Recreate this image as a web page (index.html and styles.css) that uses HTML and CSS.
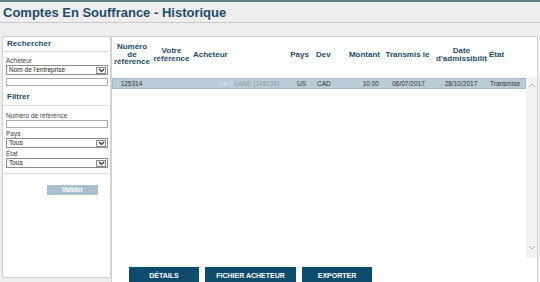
FILE: index.html
```html
<!DOCTYPE html>
<html lang="fr">
<head>
	<meta charset="utf-8">
	<title>Comptes En Souffrance - Historique</title>
	<link rel="stylesheet" href="styles.css">
</head>
<body>
	<div class="topbar">
		<h1>Comptes En Souffrance - Historique</h1>
	</div>
	<div class="main">
		<div class="side">
			<div class="sec_head">Rechercher</div>
			<div class="fld">
				<label>Acheteur</label>
				<div class="sel"><span>Nom de l'entreprise</span><i><svg width="7" height="5" viewBox="0 0 7 5"><path d="M1 1l2.5 2.5L6 1" fill="none" stroke="#333" stroke-width="1.2"/></svg></i></div>
				<div class="inp mt3"></div>
			</div>
			<div class="sec_head sec_head2">Filtrer</div>
			<div class="fld filters">
				<label>Numéro de référence</label>
				<div class="inp"></div>
				<label>Pays</label>
				<div class="sel"><span>Tous</span><i><svg width="7" height="5" viewBox="0 0 7 5"><path d="M1 1l2.5 2.5L6 1" fill="none" stroke="#333" stroke-width="1.2"/></svg></i></div>
				<label>État</label>
				<div class="sel"><span>Tous</span><i><svg width="7" height="5" viewBox="0 0 7 5"><path d="M1 1l2.5 2.5L6 1" fill="none" stroke="#333" stroke-width="1.2"/></svg></i></div>
			</div>
			<a class="btn_valider">Valider</a>
		</div>
		<div class="content">
			<div class="grid_row grid_head">
				<div class="c c1">Numéro de référence</div>
				<div class="c c2">Votre référence</div>
				<div class="c c3">Acheteur</div>
				<div class="c c4">Pays</div>
				<div class="c c5">Dev</div>
				<div class="c c6">Montant</div>
				<div class="c c7">Transmis le</div>
				<div class="c c8">Date d'admissibilité</div>
				<div class="c c9">État</div>
			</div>
			<div class="scroller">
				<div class="rows">
					<div class="grid_row grid_data current">
						<div class="c c1">125314</div>
						<div class="c c2"></div>
						<div class="c c3"><em>DAVI</em> LANE (145195)</div>
						<div class="c c4">US</div>
						<div class="c c5">CAD</div>
						<div class="c c6">10.00</div>
						<div class="c c7">06/07/2017</div>
						<div class="c c8">28/10/2017</div>
						<div class="c c9">Transmise</div>
					</div>
				</div>
				<div class="sbar">
					<svg width="8" height="5" viewBox="0 0 8 5"><path d="M1 4l3-3 3 3" fill="none" stroke="#b4b4b4" stroke-width="1"/></svg>
					<svg width="8" height="5" viewBox="0 0 8 5"><path d="M1 1l3 3 3-3" fill="none" stroke="#b4b4b4" stroke-width="1"/></svg>
				</div>
			</div>
			<div class="btnbar">
				<a class="btn">DÉTAILS</a>
				<a class="btn btn_wide">FICHIER ACHETEUR</a>
				<a class="btn">EXPORTER</a>
			</div>
		</div>
	</div>
</body>
</html>
```
FILE: styles.css
```css
*{margin:0;padding:0;box-sizing:border-box;}
html,body{height:100%;overflow:hidden;}
body{background:#eeeeee;font-family:"Liberation Sans",Arial,sans-serif;color:#333;}

.topbar{border-top:2px solid #5c7d8d;border-bottom:1px solid #c9c9c9;padding:3px 3px 2px;}
.topbar h1{font-size:13px;line-height:15px;font-weight:bold;color:#1d4d6b;}

.main{display:flex;align-items:flex-start;margin:13px 0 0 2px;}

/* left panel */
.side{width:109px;height:242px;background:#fff;border:1px solid #d2d2d2;}
.sec_head{font-size:8px;font-weight:bold;color:#1d4d6b;line-height:14px;padding-left:4px;border-bottom:1px solid #dcdcdc;}
.sec_head2{margin-top:2px;line-height:17px;}
.fld{padding:0 2px 0 3px;}
.fld label{display:block;font-size:6.5px;line-height:9px;color:#444;margin-top:4px;}
.filters label{margin-top:1px;}
.filters label:first-child{margin-top:5px;}
.sel{display:flex;align-items:center;height:10px;border:1px solid #8c8c8c;background:#fff;font-size:6.5px;line-height:8px;padding-left:2px;}
.sel span{flex:1;color:#222;}
.sel i{display:flex;align-items:center;justify-content:center;width:10px;height:7px;margin-right:1px;border:1px solid #8c8c8c;background:#f2f2f2;}
.inp{height:8px;border:1px solid #ababab;background:#fff;}
.mt3{margin-top:3px;}
.filters{padding-bottom:5px;border-bottom:1px solid #dcdcdc;}
.btn_valider{display:block;width:51px;height:10px;margin:11px 0 0 44px;background:#a9c1ce;color:#fff;font-size:6.5px;font-weight:bold;line-height:10px;text-align:center;}

/* right panel */
.content{width:427px;background:#fff;border:1px solid #d2d2d2;padding-bottom:20px;}
.grid_row{display:grid;grid-template-columns:40px 39px 96px 25px 28px 42px 51px 54px 38px;}
.grid_head{height:40px;align-items:center;font-size:8px;font-weight:bold;line-height:7.5px;color:#1d4d6b;padding-bottom:5px;}
.grid_head .c1,.grid_head .c2,.grid_head .c4,.grid_head .c7{text-align:center;}
.grid_head .c1{padding:0 1px;}
.grid_head .c3{padding-left:2px;}
.grid_head .c5{padding-left:4px;}
.grid_head .c6{text-align:right;padding-right:2px;}
.grid_head .c8{overflow:hidden;text-align:center;padding-left:3px;}
.grid_head .c9{padding-left:2px;}

.scroller{display:flex;height:181px;}
.rows{width:414px;padding-top:1px;}
.grid_data{height:11px;align-items:center;font-size:6.5px;line-height:9px;background:#b9cbd7;border:1px solid #a7bccb;color:#333;}
.grid_data .c1{text-align:center;padding-right:3px;}
.grid_data .c3{padding-left:26px;color:#8e9ba4;}
.grid_data .c3 em{font-style:normal;color:#d6e0e6;}
.grid_data .c4{text-align:center;padding-left:2px;}
.grid_data .c5{padding-left:4px;}
.grid_data .c6{text-align:right;padding-right:4px;}
.grid_data .c7,.grid_data .c8{text-align:center;}
.grid_data .c9{padding-left:2px;}
.sbar{width:11px;background:#f3f3f3;display:flex;flex-direction:column;justify-content:space-between;align-items:center;padding:6px 0 8px;}

.btnbar{display:flex;gap:6px;margin:9px 0 0 17px;}
.btn{display:block;width:70px;height:17px;padding-top:5px;background:#0e4c6c;color:#fff;font-size:7px;font-weight:bold;line-height:8px;text-align:center;}
.btn_wide{width:91px;}
```
